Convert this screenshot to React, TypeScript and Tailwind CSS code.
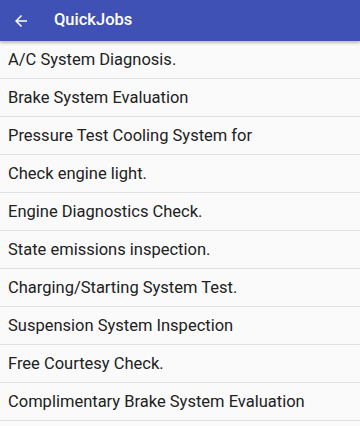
import React from "react";

const jobs = [
  "A/C System Diagnosis.",
  "Brake System Evaluation",
  "Pressure Test Cooling System for",
  "Check engine light.",
  "Engine Diagnostics Check.",
  "State emissions inspection.",
  "Charging/Starting System Test.",
  "Suspension System Inspection",
  "Free Courtesy Check.",
  "Complimentary Brake System Evaluation",
];

const App = () => {
  return (
    <div className="w-[360px] h-[426px] overflow-hidden bg-[#fafafa] font-['Roboto',sans-serif]">
      <div className="h-[41px] bg-[#3f51b5] flex items-center shadow-[0_2px_3px_rgba(0,0,0,0.25)] relative z-10">
        <svg width="18" height="18" viewBox="0 0 24 24" className="ml-[12px] fill-white">
          <path d="M20 11H7.83l5.59-5.59L12 4l-8 8 8 8 1.41-1.41L7.83 13H20v-2z" />
        </svg>
        <span className="ml-[24px] text-white text-[16.5px] font-medium">QuickJobs</span>
      </div>
      <ul>
        {jobs.map((job) => (
          <li
            key={job}
            className="h-[38px] flex items-center pl-[8px] pt-[2px] border-b border-[#e0e0e0] text-[16.5px] text-[#212121]"
          >
            {job}
          </li>
        ))}
      </ul>
    </div>
  );
};

export default App;
